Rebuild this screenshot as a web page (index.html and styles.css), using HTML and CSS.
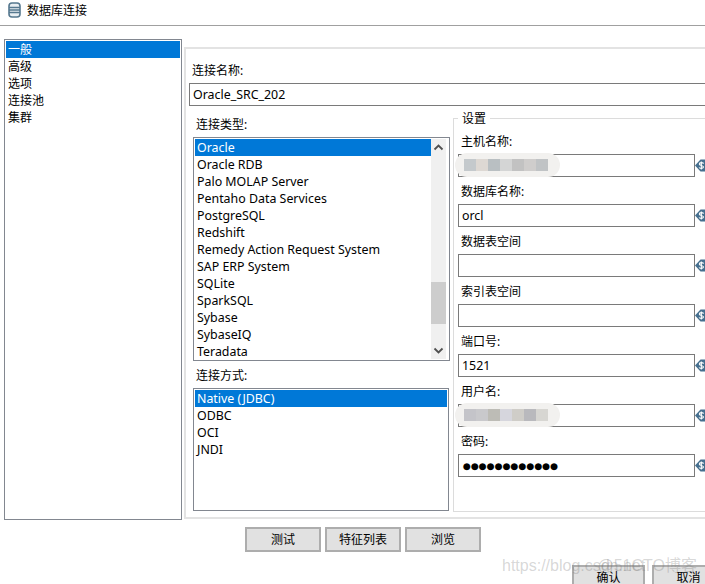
FILE: index.html
```html
<!DOCTYPE html>
<html lang="zh">
<head>
<meta charset="utf-8">
<title>数据库连接</title>
<link rel="stylesheet" href="styles.css">
</head>
<body>
<svg class="defs" width="0" height="0" aria-hidden="true">
  <symbol id="var" viewBox="0 0 10 13">
    <path d="M5.5 0.5 L0 6.5 L5.5 12.5 L10 12.5 L10 0.5 Z" fill="#456f8f"/>
    <path d="M8.6 4.6 C8 3.2 4.4 3.2 4.3 5 C4.2 6.8 8.6 6.1 8.5 8 C8.4 9.7 4.8 9.7 4.1 8.5 M6.3 2.4 V10.6" fill="none" stroke="#fff" stroke-width="1.1"/>
  </symbol>
</svg>
<div class="dialog">
  <header class="titlebar">
    <svg class="db-icon" width="13" height="16" viewBox="0 0 13 16">
      <rect x="1" y="1" width="11" height="14" rx="3" fill="#e8eef2" stroke="#56788f" stroke-width="1.6"/>
      <path d="M1 5.5 H12 M1 8 H12 M1 10.5 H12" stroke="#56788f" stroke-width="1.3"/>
    </svg>
    <span class="title">数据库连接</span>
  </header>

  <main class="body-row">
    <ul class="list side-list">
      <li class="sel">一般</li>
      <li>高级</li>
      <li>选项</li>
      <li>连接池</li>
      <li>集群</li>
    </ul>

    <section class="panel">
      <div class="name-label">连接名称:</div>
      <div class="field name-input">Oracle_SRC_202</div>

      <div class="columns">
        <div class="left-col">
          <div class="col-label">连接类型:</div>
          <div class="list type-list">
            <ul class="type-items">
              <li class="sel">Oracle</li>
              <li>Oracle RDB</li>
              <li>Palo MOLAP Server</li>
              <li>Pentaho Data Services</li>
              <li>PostgreSQL</li>
              <li>Redshift</li>
              <li>Remedy Action Request System</li>
              <li>SAP ERP System</li>
              <li>SQLite</li>
              <li>SparkSQL</li>
              <li>Sybase</li>
              <li>SybaseIQ</li>
              <li>Teradata</li>
            </ul>
            <div class="scrollbar">
              <svg width="15" height="17" viewBox="0 0 15 17"><path d="M3.5 10.5 L7.5 6.5 L11.5 10.5" fill="none" stroke="#505050" stroke-width="1.8"/></svg>
              <div class="track"><div class="thumb"></div></div>
              <svg width="15" height="17" viewBox="0 0 15 17"><path d="M3.5 6.5 L7.5 10.5 L11.5 6.5" fill="none" stroke="#505050" stroke-width="1.8"/></svg>
            </div>
          </div>
          <div class="col-label">连接方式:</div>
          <ul class="list method-list">
            <li class="sel">Native (JDBC)</li>
            <li>ODBC</li>
            <li>OCI</li>
            <li>JNDI</li>
          </ul>
        </div>

        <fieldset class="settings">
          <legend>设置</legend>
          <div class="row">
            <label>主机名称:</label>
            <div class="input-line">
              <div class="field">
                <div class="mosaic"><i class="a1"></i><i class="a2"></i><i class="a3"></i><i class="a4"></i><i class="a5"></i><i class="a6"></i><i class="a7"></i></div>
              </div>
              <svg class="var"><use href="#var"/></svg>
            </div>
          </div>
          <div class="row">
            <label>数据库名称:</label>
            <div class="input-line"><div class="field">orcl</div><svg class="var"><use href="#var"/></svg></div>
          </div>
          <div class="row">
            <label>数据表空间</label>
            <div class="input-line"><div class="field"></div><svg class="var"><use href="#var"/></svg></div>
          </div>
          <div class="row">
            <label>索引表空间</label>
            <div class="input-line"><div class="field"></div><svg class="var"><use href="#var"/></svg></div>
          </div>
          <div class="row">
            <label>端口号:</label>
            <div class="input-line"><div class="field">1521</div><svg class="var"><use href="#var"/></svg></div>
          </div>
          <div class="row">
            <label>用户名:</label>
            <div class="input-line">
              <div class="field">
                <div class="mosaic"><i class="b1"></i><i class="b2"></i><i class="b3"></i><i class="b4"></i><i class="b5"></i><i class="b6"></i><i class="b7"></i></div>
              </div>
              <svg class="var"><use href="#var"/></svg>
            </div>
          </div>
          <div class="row">
            <label>密码:</label>
            <div class="input-line"><div class="field password">●●●●●●●●●●●●</div><svg class="var"><use href="#var"/></svg></div>
          </div>
        </fieldset>
      </div>
    </section>
  </main>

  <div class="actions">
    <button class="btn">测试</button>
    <button class="btn">特征列表</button>
    <button class="btn">浏览</button>
  </div>

  <footer class="footer">
    <button class="btn ok">确认</button>
    <button class="btn cancel">取消</button>
  </footer>
</div>
<div class="watermark"><span>https://blog.csdn.net</span><span class="wm2">@51CTO博客</span></div>
</body>
</html>
```

FILE: styles.css
```css
* { box-sizing: border-box; }
html, body { margin: 0; padding: 0; background: #fff; }
body {
  width: 705px;
  height: 584px;
  overflow: hidden;
  position: relative;
  font-family: "Noto Sans", "Noto Sans CJK SC", sans-serif;
  font-size: 12px;
  line-height: 17px;
  color: #000;
}
.defs { position: absolute; }
ul { list-style: none; margin: 0; padding: 0; }

.titlebar {
  height: 26px;
  border-bottom: 1px solid #a0a0a0;
  display: flex;
  align-items: flex-start;
  padding: 2px 0 0 8px;
  gap: 6px;
}
.title { line-height: 17px; }

.body-row {
  display: flex;
  align-items: flex-start;
  padding: 13px 0 0 4px;
  gap: 2px;
}

.list { border: 1px solid #828790; background: #fff; }
.list li { height: 17px; padding-left: 2px; white-space: nowrap; }
.list li.sel { background: #0078d7; color: #fff; }

.side-list { width: 178px; height: 481px; padding: 1px; flex: none; }

.panel {
  margin-top: 8px;
  width: 521px;
  height: 472px;
  flex: none;
  border: 2px solid #e3e3e3;
  border-right: 0;
  padding: 13px 0 0 3px;
}
.name-label { height: 17px; padding-left: 3px; margin-bottom: 4px; }
.field {
  position: relative;
  height: 23px;
  border: 1px solid #7a7a7a;
  padding: 2px 3px;
  line-height: 18px;
  background: #fff;
  font-size: 12.4px;
}
.name-input { width: 516px; border-right: 0; }

.columns { display: flex; align-items: flex-start; margin-top: 4px; gap: 3px; }

.left-col { width: 261px; flex: none; padding-left: 4px; display: flex; flex-direction: column; }
.col-label { height: 17px; padding-left: 3px; margin-top: 6px; margin-bottom: 4px; }

.type-list { display: flex; width: 257px; height: 224px; padding: 1px; font-size: 12.4px; }
.type-items { flex: 1; overflow: hidden; }
.type-items li { white-space: nowrap; }
.scrollbar {
  width: 17px;
  padding-right: 2px;
  background: linear-gradient(#fff, #fff) right / 2px 100% no-repeat, #f0f0f0;
  display: flex;
  flex-direction: column;
  flex: none;
}
.scrollbar svg { display: block; flex: none; }
.track { flex: 1; display: flex; flex-direction: column; justify-content: flex-end; padding-bottom: 18px; }
.thumb { height: 42px; background: #cdcdcd; }

.method-list { width: 256px; height: 123px; padding: 1px; font-size: 12.4px; }

.settings {
  margin: 0;
  padding: 0 0 0 4px;
  width: 252px;
  height: 402px;
  flex: none;
  border: 1px solid #dcdcdc;
  border-right: 0;
  min-width: 0;
}
.settings legend { margin-left: 0; padding: 0 4px; height: 17px; line-height: 17px; }
.row { margin-bottom: 6px; }
.row:first-of-type { margin-top: 6px; }
.row label { display: block; height: 17px; padding-left: 3px; margin-bottom: 4px; }
.input-line { display: flex; align-items: center; }
.input-line .field { width: 237px; flex: none; }
.var { width: 10px; height: 13px; flex: none; }

.field.password { font-size: 9.1px; padding-left: 4px; font-family: "DejaVu Sans", sans-serif; }

.mosaic {
  position: absolute;
  left: -4px;
  top: -2px;
  width: 105px;
  height: 24px;
  padding: 6px 0 0 9px;
  background: #f2f1ef;
  border-radius: 12px;
  display: flex;
}
.mosaic i { display: block; width: 12px; height: 12px; }
.a1 { background: #c4c9cc; } .a2 { background: #ddd8d3; } .a3 { background: #b9bfc2; }
.a4 { background: #d4d5d5; } .a5 { background: #c2c2c2; } .a6 { background: #cfcdcc; } .a7 { background: #c0c3c5; }
.b1 { background: #c4c4c9; } .b2 { background: #c9c9cc; } .b3 { background: #bdbcb6; }
.b4 { background: #d6d6dd; } .b5 { background: #cfcdc8; } .b6 { background: #b9b9bd; } .b7 { background: #d7d6d2; }

.actions { display: flex; gap: 4px; padding: 7px 0 0 245px; }
.btn {
  width: 76px;
  height: 25px;
  border: 2px solid #adadad;
  background: #e1e1e1;
  font: inherit;
  color: #000;
  padding: 0;
}

.footer { display: flex; gap: 7px; padding: 13px 0 0 572px; }
.footer .btn {
  height: 19px;
  border-bottom: 0;
  padding-top: 2px;
  display: flex;
  align-items: flex-start;
  justify-content: center;
  overflow: hidden;
  flex: none;
}
.footer .ok { width: 73px; }
.footer .cancel { width: 53px; border-right: 0; padding-left: 18px; }

.watermark {
  position: absolute;
  left: 502px;
  top: 556px;
  width: 200px;
  height: 20px;
  font-family: "Liberation Sans", "Noto Sans CJK SC", sans-serif;
  font-size: 16px;
  line-height: 20px;
  color: rgba(120, 120, 120, 0.3);
  white-space: nowrap;
  overflow: hidden;
}
.wm2 { position: absolute; right: 5px; top: 0; }
```
